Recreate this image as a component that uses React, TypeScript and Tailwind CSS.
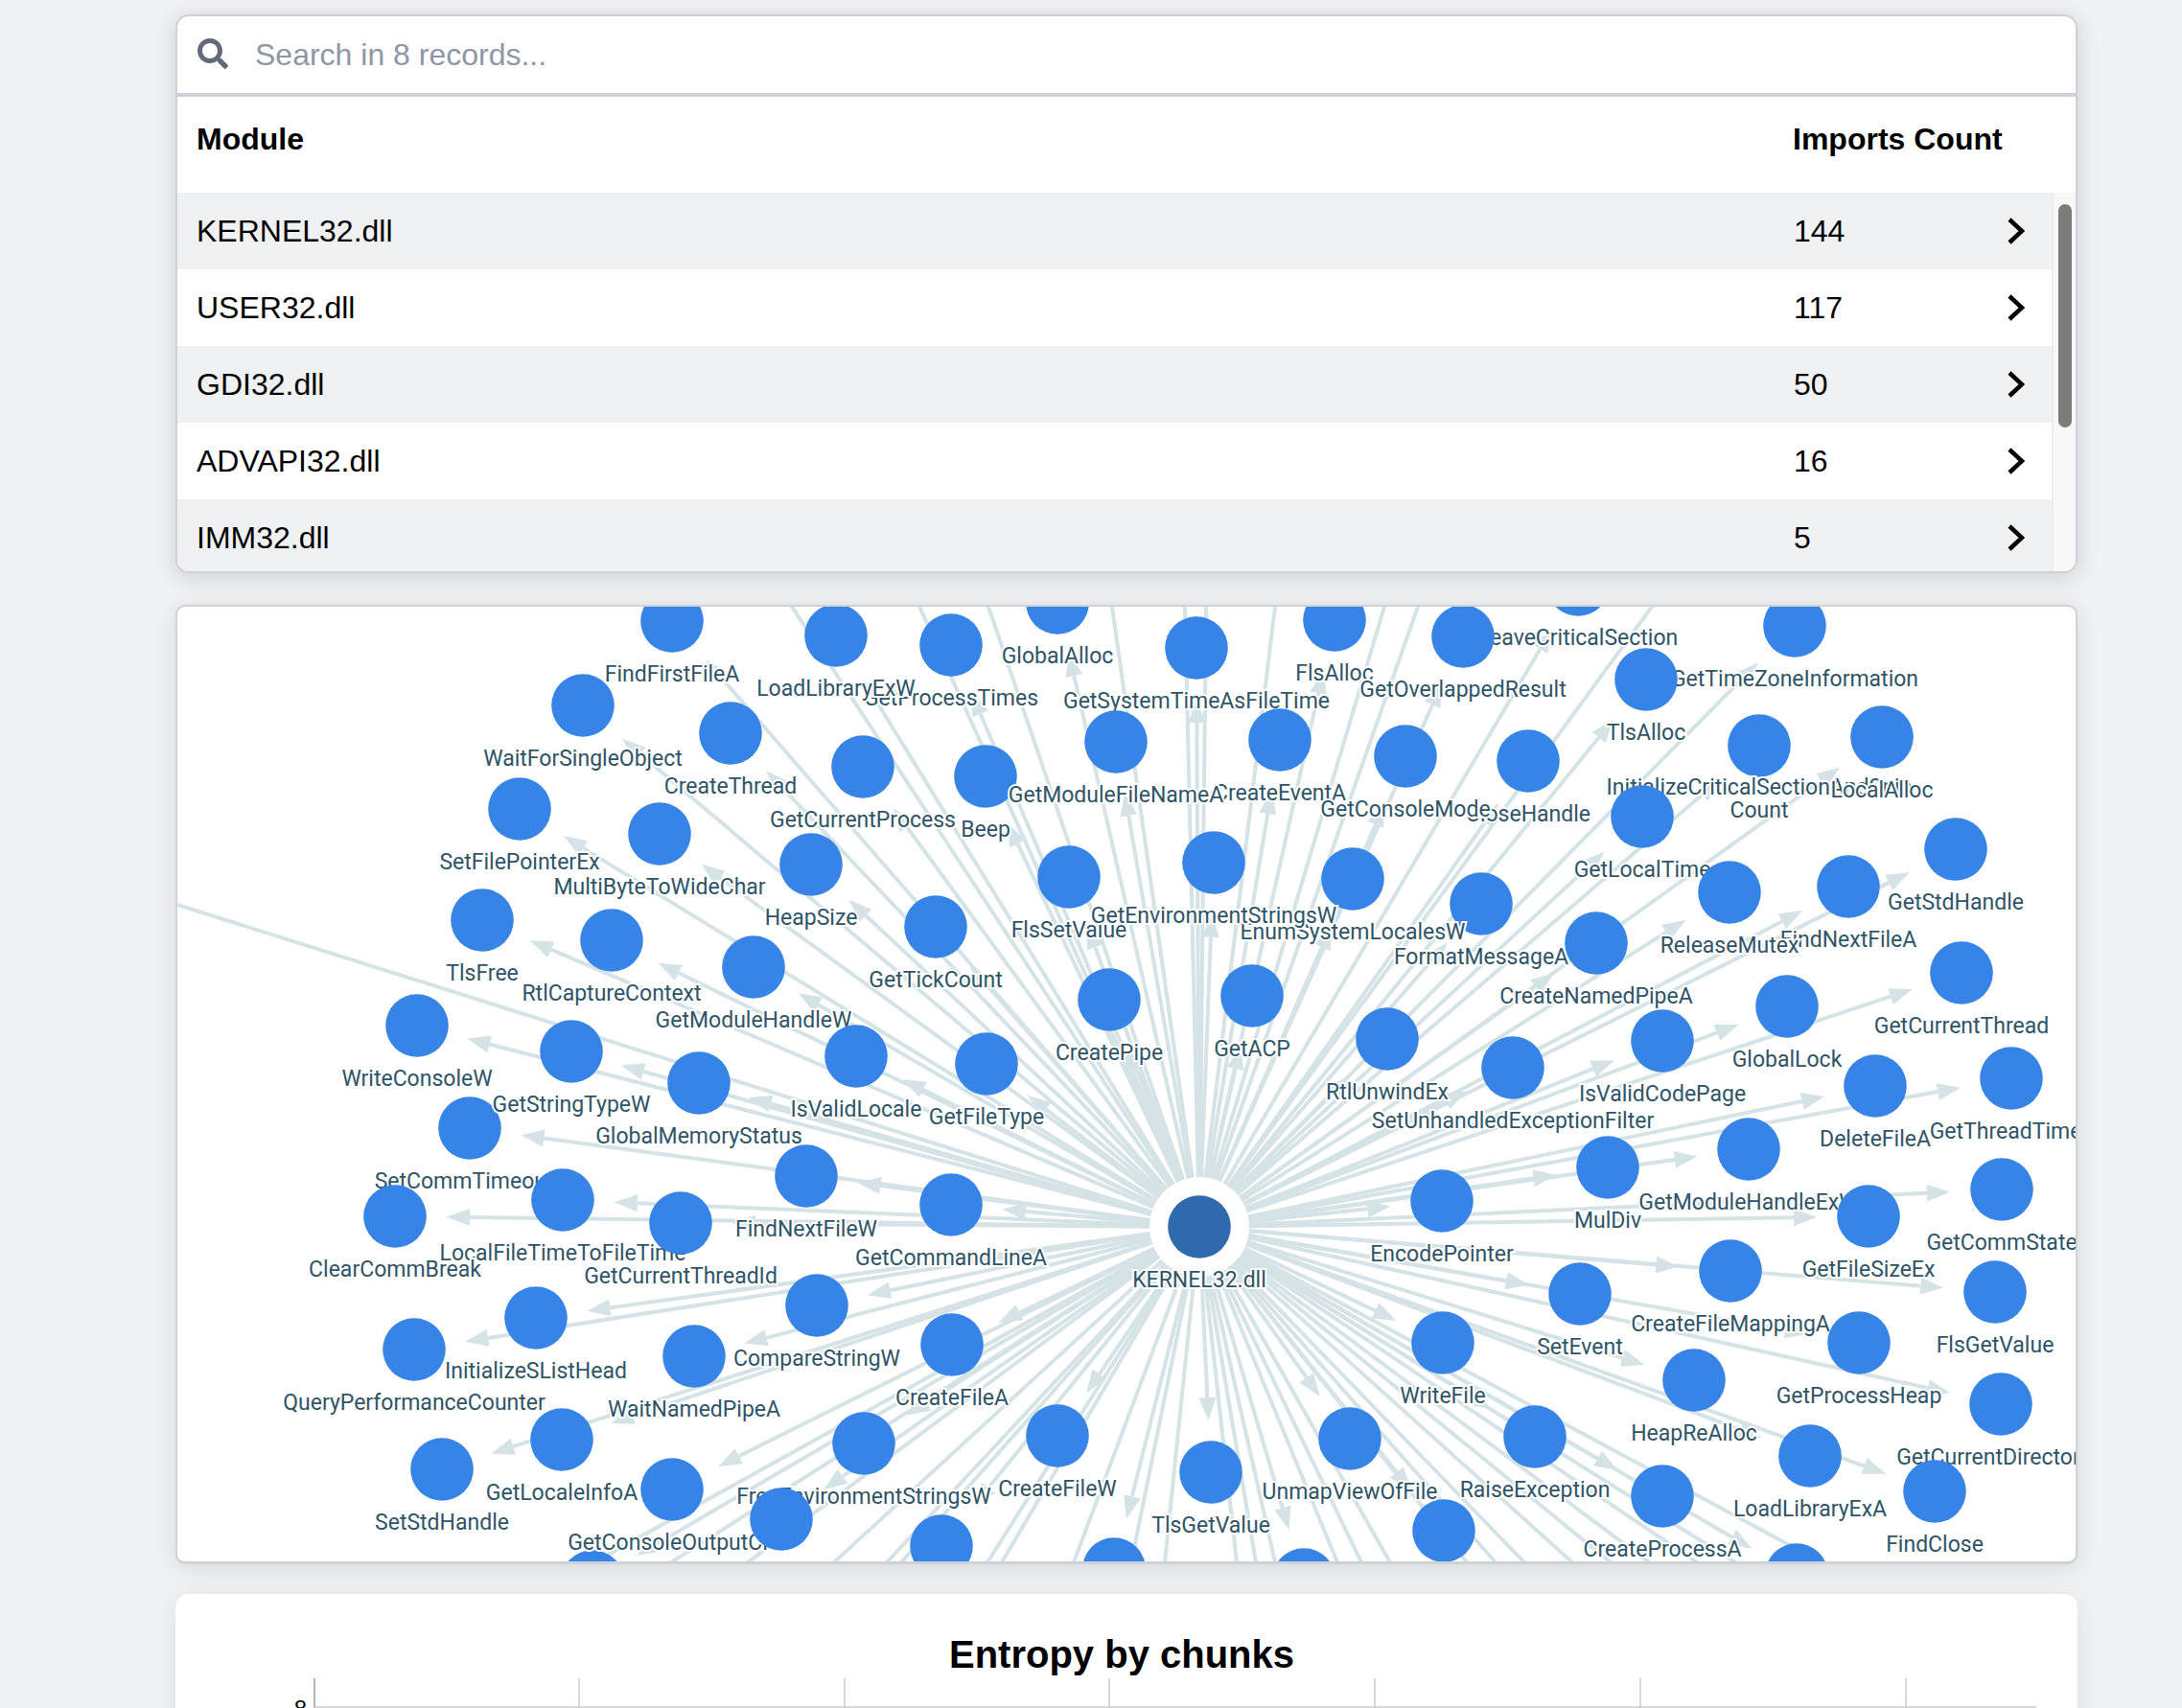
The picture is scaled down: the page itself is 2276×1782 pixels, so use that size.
import { FaSearch } from "react-icons/fa";

// module rows in the imports table
const modules = [
    { name: "KERNEL32.dll", count: 144 },
    { name: "USER32.dll", count: 117 },
    { name: "GDI32.dll", count: 50 },
    { name: "ADVAPI32.dll", count: 16 },
    { name: "IMM32.dll", count: 5 },
];

const CX = 1251;
const CY = 1280;

// draw order matters here: later nodes sit over earlier labels
const nodes: [string, number, number][] = [
    ["GetFileMappingX", 1874, 1643],
    ["UnloadX", 1506, 1597],
    ["LstrlenX", 1360, 1648],
    ["VirtualAllocX", 1162, 1637],
    ["VirtualFreeX", 982, 1613],
    ["SleepX", 618, 1650],
    ["GetConsoleOutputCP", 701, 1554],
    ["FreeEnvironmentStringsW", 901, 1506],
    ["GetVersionX", 815, 1585],
    ["LeaveCriticalSection", 1646, 610],
    ["FlsAlloc", 1392, 647],
    ["GetOverlappedResult", 1526, 664],
    ["GetProcessTimes", 992, 673],
    ["LoadLibraryExW", 872, 663],
    ["WaitForSingleObject", 608, 736],
    ["FindFirstFileA", 701, 648],
    ["GlobalAlloc", 1103, 629],
    ["GetSystemTimeAsFileTime", 1248, 676],
    ["GetTimeZoneInformation", 1872, 653],
    ["TlsAlloc", 1717, 709],
    ["CreateThread", 762, 765],
    ["SetFilePointerEx", 542, 844],
    ["MultiByteToWideChar", 688, 870],
    ["HeapSize", 846, 902],
    ["GetCurrentProcess", 900, 800],
    ["Beep", 1028, 810],
    ["CreateEventA", 1335, 772],
    ["GetModuleFileNameA", 1164, 774],
    ["CloseHandle", 1594, 794],
    ["GetConsoleMode", 1466, 789],
    ["InitializeCriticalSectionAndSpin", 1835, 778],
    ["LocalAlloc", 1963, 769],
    ["GetLocalTime", 1713, 852],
    ["GetStdHandle", 2040, 886],
    ["FindNextFileA", 1928, 925],
    ["ReleaseMutex", 1804, 931],
    ["FormatMessageA", 1545, 943],
    ["CreateNamedPipeA", 1665, 984],
    ["FlsSetValue", 1115, 915],
    ["EnumSystemLocalesW", 1411, 917],
    ["GetEnvironmentStringsW", 1266, 900],
    ["GetTickCount", 976, 967],
    ["TlsFree", 503, 960],
    ["RtlCaptureContext", 638, 981],
    ["GetModuleHandleW", 786, 1009],
    ["CreatePipe", 1157, 1043],
    ["GetACP", 1306, 1039],
    ["GetCurrentThread", 2046, 1015],
    ["GlobalLock", 1864, 1050],
    ["WriteConsoleW", 435, 1070],
    ["RtlUnwindEx", 1447, 1084],
    ["IsValidCodePage", 1734, 1086],
    ["GlobalMemoryStatus", 729, 1130],
    ["IsValidLocale", 893, 1102],
    ["GetFileType", 1029, 1110],
    ["SetUnhandledExceptionFilter", 1578, 1114],
    ["DeleteFileA", 1956, 1133],
    ["GetThreadTimes", 2098, 1125],
    ["SetCommTimeouts", 490, 1177],
    ["GetStringTypeW", 596, 1097],
    ["LocalFileTimeToFileTime", 587, 1252],
    ["ClearCommBreak", 412, 1269],
    ["GetCurrentThreadId", 710, 1276],
    ["FindNextFileW", 841, 1227],
    ["GetCommandLineA", 992, 1257],
    ["GetModuleHandleExW", 1824, 1199],
    ["MulDiv", 1677, 1218],
    ["GetFileSizeEx", 1949, 1269],
    ["GetCommState", 2088, 1241],
    ["EncodePointer", 1504, 1253],
    ["CreateFileMappingA", 1805, 1326],
    ["SetEvent", 1648, 1350],
    ["FlsGetValue", 2081, 1348],
    ["GetProcessHeap", 1939, 1401],
    ["CompareStringW", 852, 1362],
    ["InitializeSListHead", 559, 1375],
    ["QueryPerformanceCounter", 432, 1408],
    ["WaitNamedPipeA", 724, 1415],
    ["CreateFileA", 993, 1403],
    ["WriteFile", 1505, 1401],
    ["HeapReAlloc", 1767, 1440],
    ["GetCurrentDirectoryA", 2087, 1465],
    ["LoadLibraryExA", 1888, 1519],
    ["FindClose", 2018, 1556],
    ["RaiseException", 1601, 1499],
    ["CreateProcessA", 1734, 1561],
    ["GetLocaleInfoA", 586, 1502],
    ["SetStdHandle", 461, 1533],
    ["CreateFileW", 1103, 1498],
    ["TlsGetValue", 1263, 1536],
    ["UnmapViewOfFile", 1408, 1501],
];

// these sit below the card edge, only their circle top shows
const clippedLabels = ["GetFileMappingX", "UnloadX", "LstrlenX", "VirtualAllocX", "VirtualFreeX", "SleepX", "GetVersionX"];

// where the edges to nodes outside the card cross its top / bottom
const topRays = [826, 959, 1031, 1160, 1236, 1258, 1330, 1444, 1479, 1723];
const bottomRays = [620, 700, 780, 870, 925, 940, 1030, 1045, 1120, 1180, 1215, 1290, 1310, 1330, 1395, 1420, 1450, 1530, 1560, 1590, 1640, 1680, 1720, 1770, 1810, 1900];

function Edge({ x, y }: { x: number; y: number }) {
    const dx = x - CX;
    const dy = y - CY;
    const len = Math.hypot(dx, dy);
    const ux = dx / len;
    const uy = dy / len;
    // arrow tip stops short of the node
    const tipX = x - ux * 54;
    const tipY = y - uy * 54;
    const baseX = tipX - ux * 24;
    const baseY = tipY - uy * 24;
    const points = [
        `${tipX},${tipY}`,
        `${baseX - uy * 9},${baseY + ux * 9}`,
        `${baseX + uy * 9},${baseY - ux * 9}`,
    ].join(" ");
    return (
        <>
            <line x1={CX} y1={CY} x2={baseX} y2={baseY} stroke="#d5e2e6" strokeWidth={4} />
            <polygon points={points} fill="#d5e2e6" />
        </>
    );
}

function Label({ x, y, children }: { x: number; y: number; children: string }) {
    return (
        <text x={x} y={y} textAnchor="middle" stroke="#ffffff" strokeWidth={4} paintOrder="stroke">
            {children}
        </text>
    );
}

function ImportsGraph() {
    return (
        <svg
            width={1980}
            height={996}
            viewBox="185 633 1980 996"
            className="block font-['Roboto',sans-serif] text-[23px] fill-[#2f5468]"
        >
            {nodes.map(([name, x, y]) => (
                <Edge key={name} x={x} y={y} />
            ))}
            {topRays.map((x) => (
                <line key={x} x1={CX} y1={CY} x2={CX + (x - CX) * 1.1} y2={CY - (CY - 633) * 1.1} stroke="#d5e2e6" strokeWidth={4} />
            ))}
            {bottomRays.map((x) => (
                <line key={x} x1={CX} y1={CY} x2={CX + (x - CX) * 1.1} y2={CY + (1630 - CY) * 1.1} stroke="#d5e2e6" strokeWidth={4} />
            ))}
            <line x1={CX} y1={CY} x2={185} y2={944} stroke="#d5e2e6" strokeWidth={4} />
            <circle cx={CX} cy={CY} r={52} fill="#ffffff" />

            {nodes.map(([name, x, y]) => (
                <g key={name}>
                    <circle cx={x} cy={y} r={32.8} fill="#3784e8" />
                    {name === "InitializeCriticalSectionAndSpin" ? (
                        <>
                            <Label x={x} y={y + 51}>{name}</Label>
                            <Label x={x} y={y + 75}>Count</Label>
                        </>
                    ) : clippedLabels.includes(name) ? null : (
                        <Label x={x} y={y + 63}>{name}</Label>
                    )}
                </g>
            ))}

            <circle cx={CX} cy={CY} r={32.8} fill="#2f69ae" />
            <Label x={CX} y={CY + 63}>KERNEL32.dll</Label>
        </svg>
    );
}

function Chevron() {
    return (
        <svg width={18} height={28} viewBox="0 0 18 28" className="block">
            <polyline points="2,2 15,14 2,26" fill="none" stroke="#000000" strokeWidth={4.5} />
        </svg>
    );
}

function ModuleRow({ name, count, shaded }: { name: string; count: number; shaded: boolean }) {
    return (
        <div className={`flex h-20 items-center ${shaded ? "bg-[#f0f1f3]" : "bg-white"}`}>
            <div className="flex-1 pl-[20px]">{name}</div>
            <div className="w-[223px]">{count}</div>
            <div className="w-[46px]">
                <Chevron />
            </div>
        </div>
    );
}

export default function App() {
    return (
        <div className="h-[1782px] overflow-hidden bg-[#f0f1f3] pl-[183px] pr-[109px] pt-[15px] font-['Liberation_Sans',sans-serif] text-[32px] text-black">
            {/* imports table */}
            <div className="h-[583px] overflow-hidden rounded-[14px] border-2 border-[#cdd1d9] bg-white shadow-[0_4px_24px_rgba(0,0,0,0.14)]">
                <div className="flex h-[84px] items-center border-b-4 border-[#cdd1d9]">
                    <FaSearch className="-mt-[3px] ml-[21px] text-[#636b7a]" size={32} />
                    <span className="ml-[28px] text-[#8f96a6]">Search in 8 records...</span>
                </div>
                <div className="flex h-[100px] items-center pb-[12px] font-bold">
                    <div className="flex-1 pl-[20px]">Module</div>
                    <div className="w-[295px]">Imports Count</div>
                </div>
                <div className="flex">
                    <div className="flex-1">
                        {modules.map((m, i) => (
                            <ModuleRow key={m.name} name={m.name} count={m.count} shaded={i % 2 === 0} />
                        ))}
                    </div>
                    <div className="h-[396px] w-[25px] border-l-2 border-[#ececec] bg-[#f8f8f8] pl-[5px] pt-[12px]">
                        <div className="h-[233px] w-[14px] rounded-full bg-[#7c7c7c]" />
                    </div>
                </div>
            </div>

            {/* imports graph */}
            <div className="mt-[33px] h-[1001px] overflow-hidden rounded-[10px] border-x-2 border-b-[3px] border-t-2 border-[#cdd1d9] bg-white shadow-[0_4px_24px_rgba(0,0,0,0.1)]">
                <ImportsGraph />
            </div>

            {/* entropy chart */}
            <div className="mt-[31px] h-[200px] rounded-[14px] bg-white shadow-[0_4px_24px_rgba(0,0,0,0.08)]">
                <h2 className="pr-[10px] pt-[44px] text-center text-[40px] font-bold leading-[38px]">Entropy by chunks</h2>
                <svg width={1984} height={40} viewBox="183 1745 1984 40" className="block font-['Liberation_Sans',sans-serif] text-[24px]">
                    {[604, 881, 1157, 1434, 1711, 1988].map((x) => (
                        <line key={x} x1={x} y1={1751} x2={x} y2={1785} stroke="#cccccc" strokeWidth={1.5} />
                    ))}
                    <line x1={328} y1={1751} x2={328} y2={1785} stroke="#999999" strokeWidth={1.5} />
                    <line x1={328} y1={1781} x2={2124} y2={1781} stroke="#cccccc" strokeWidth={1.5} />
                    <text x={320} y={1791} textAnchor="end" fill="#000000">8</text>
                </svg>
            </div>
        </div>
    );
}
